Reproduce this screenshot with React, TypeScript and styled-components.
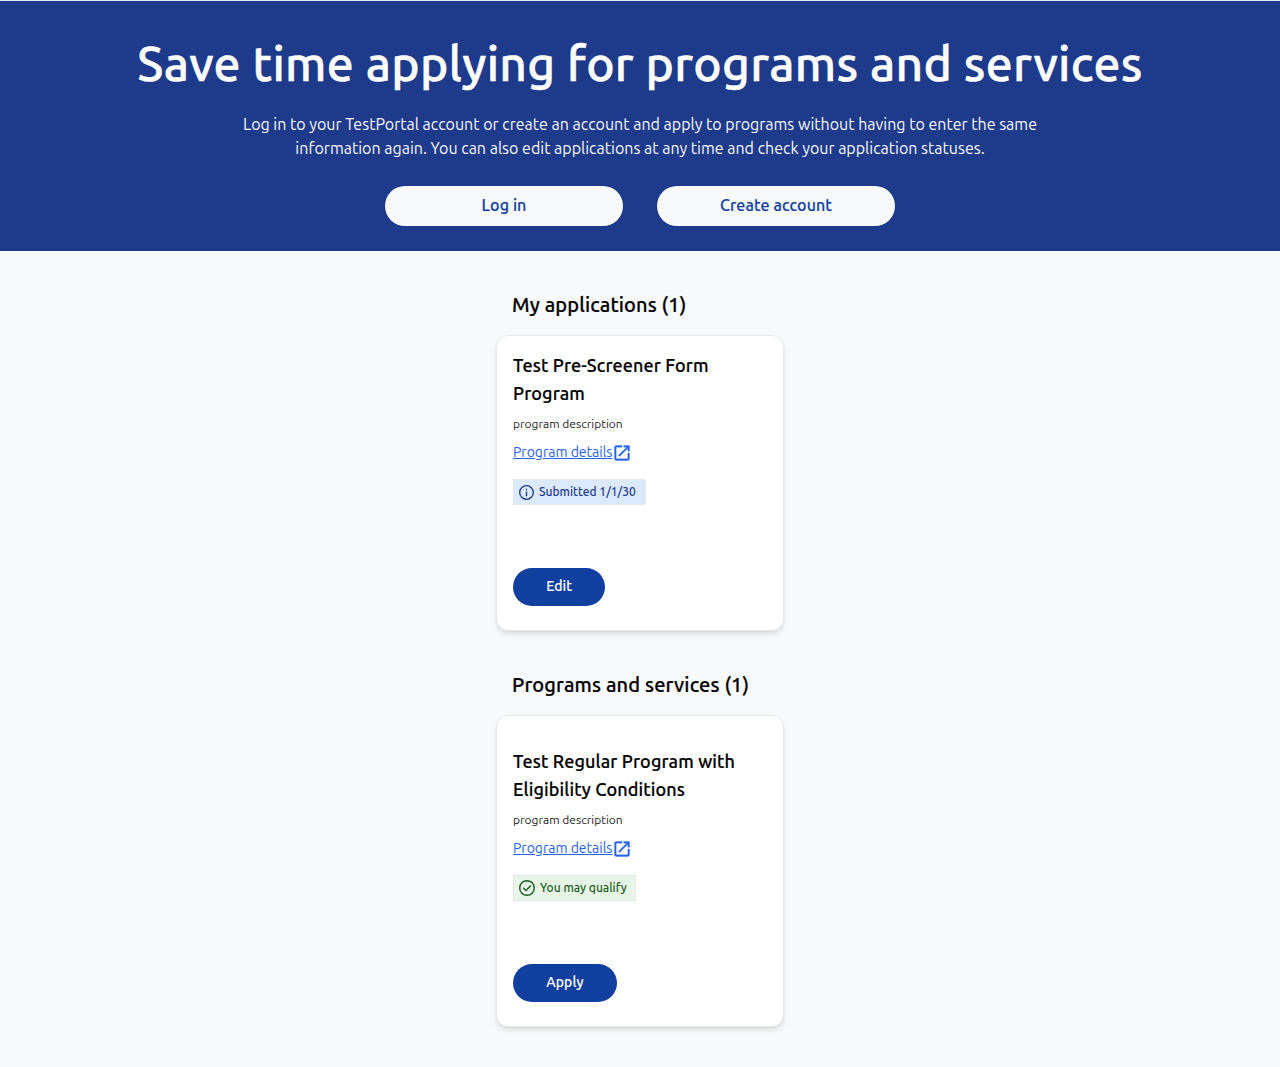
import React from 'react';
import styled, { createGlobalStyle, css } from 'styled-components';

const GlobalStyle = createGlobalStyle`
  *, *::before, *::after { box-sizing: border-box; }
  body {
    margin: 0;
    background: #f8f9fb;
    color: #000;
    font-family: Ubuntu, "Noto Sans", "Open Sans", sans-serif;
    font-size: 16px;
    line-height: 24px;
  }
  h1, h2, h3, p { margin: 0; }
  button { font-family: inherit; cursor: pointer; }
`;

/* Semi-bold: the medium cut, slightly thickened and widened. */
const semiBold = css`
  font-weight: 500;
  letter-spacing: 0.0066em;
  -webkit-text-stroke: 0.01em currentColor;
`;

const Page = styled.div`
  min-height: 1067px;
  border-top: 1px solid #e5e7eb;
`;

const Hero = styled.header`
  display: flex;
  flex-direction: column;
  align-items: center;
  height: 250px;
  padding-top: 38px;
  background: #1e3a8a;
  color: #f8f9fb;
  text-align: center;
`;

const HeroTitle = styled.h1`
  ${semiBold}
  font-size: 48px;
  line-height: 48px;
  color: #fff;
  white-space: nowrap;
`;

const HeroText = styled.p`
  width: 832px;
  margin-top: 25px;
`;

const HeroActions = styled.div`
  display: flex;
  gap: 34px;
  margin-top: 26px;
`;

const HeroButton = styled.button`
  ${semiBold}
  width: 238px;
  height: 40px;
  padding: 0 0 2px;
  border: 0;
  border-radius: 20px;
  background: #f8f9fb;
  color: #113f9f;
  font-size: 16px;
  line-height: 24px;
`;

const Main = styled.main`
  display: flex;
  flex-direction: column;
  gap: 40px;
  width: 288px;
  margin: 0 auto;
  padding-top: 40px;
`;

const SectionTitle = styled.h2`
  ${semiBold}
  margin-bottom: 16px;
  padding-left: 16px;
  font-size: 20px;
  line-height: 28px;
  white-space: nowrap;
`;

const Card = styled.article<{ $height: number }>`
  display: flex;
  flex-direction: column;
  align-items: flex-start;
  justify-content: space-between;
  height: ${({ $height }) => $height}px;
  padding: 15px 16px 24px;
  border: 1px solid #e5e7eb;
  border-radius: 12px;
  background: #fff;
  box-shadow: 0 4px 6px -1px rgba(0, 0, 0, 0.1), 0 2px 4px -2px rgba(0, 0, 0, 0.1);
`;

const CardBody = styled.div<{ $offset: number }>`
  display: flex;
  flex-direction: column;
  align-items: flex-start;
  padding-top: ${({ $offset }) => $offset}px;
`;

const CardTitle = styled.h3`
  ${semiBold}
  font-size: 18px;
  line-height: 28px;
`;

const Description = styled.p`
  margin-top: 9px;
  color: #1b1b1b;
  font-size: 12px;
  line-height: 16px;
`;

const DetailsLink = styled.a`
  display: flex;
  align-items: center;
  margin-top: 9px;
  color: #2563eb;
  font-size: 14px;
  line-height: 20px;
  text-decoration: underline;

  svg { display: block; margin: 2px 0 0 -0.4px; }
`;

const Badge = styled.div<{ $tone: 'info' | 'success' }>`
  display: flex;
  align-items: center;
  gap: 5px;
  width: ${({ $tone }) => ($tone === 'info' ? 133 : 123)}px;
  height: 26px;
  margin-top: 16px;
  padding-left: 5px;
  border: 1px solid #e5e7eb;
  background: ${({ $tone }) => ($tone === 'info' ? '#dbeafe' : '#e8f5e9')};
  color: ${({ $tone }) => ($tone === 'info' ? '#1e3a8a' : '#1b5e20')};
  font-size: 12px;
  font-weight: 500;
  line-height: 16px;
  white-space: nowrap;

  svg { flex: none; }
`;

const CardButton = styled.button`
  ${semiBold}
  height: 38px;
  padding: 0 33.2px 2px;
  border: 0;
  border-radius: 19px;
  background: #113f9f;
  color: #f8f9fb;
  font-size: 14px;
  line-height: 20px;
`;

const OpenIcon = () => (
  <svg width="20" height="20" viewBox="0 0 24 24" fill="currentColor" stroke="currentColor" strokeWidth="0.35" aria-hidden="true">
    <path d="M19 19H5V5h7V3H5a2 2 0 0 0-2 2v14a2 2 0 0 0 2 2h14c1.1 0 2-.9 2-2v-7h-2v7zM14 3v2h3.59l-9.83 9.83 1.41 1.41L19 6.41V10h2V3h-7z" />
  </svg>
);

const InfoIcon = () => (
  <svg width="15" height="15" viewBox="0 0 20 20" fill="currentColor" aria-hidden="true">
    <path d="M9.1 8.8h1.8v6.2H9.1zM9.1 5h1.8v2H9.1z" />
    <path d="M10 0a10 10 0 1 0 0 20 10 10 0 0 0 0-20zm0 18.2a8.2 8.2 0 1 1 0-16.4 8.2 8.2 0 0 1 0 16.4z" />
  </svg>
);

const CheckIcon = () => (
  <svg width="16" height="16" viewBox="0 0 20 20" fill="currentColor" aria-hidden="true">
    <path d="M10 0a10 10 0 1 0 0 20 10 10 0 0 0 0-20zm0 18.2a8.2 8.2 0 1 1 0-16.4 8.2 8.2 0 0 1 0 16.4z" />
    <path d="M14.3 6.1l-5.7 5.7-2.8-2.8-1.3 1.3 4.1 4.1 7-7z" />
  </svg>
);

interface ProgramCardProps {
  title: string;
  badge: string;
  tone: 'info' | 'success';
  action: string;
  height: number;
  offset?: number;
}

const ProgramCard = ({ title, badge, tone, action, height, offset = 0 }: ProgramCardProps) => (
  <Card $height={height}>
    <CardBody $offset={offset}>
      <CardTitle>{title}</CardTitle>
      <Description>program description</Description>
      <DetailsLink href="#">
        Program details
        <OpenIcon />
      </DetailsLink>
      <Badge $tone={tone}>
        {tone === 'info' ? <InfoIcon /> : <CheckIcon />}
        {badge}
      </Badge>
    </CardBody>
    <CardButton>{action}</CardButton>
  </Card>
);

export default function App() {
  return (
    <Page>
      <GlobalStyle />
      <Hero>
        <HeroTitle>Save time applying for programs and services</HeroTitle>
        <HeroText>
          Log in to your TestPortal account or create an account and apply to programs without having to enter the
          same information again. You can also edit applications at any time and check your application statuses.
        </HeroText>
        <HeroActions>
          <HeroButton>Log in</HeroButton>
          <HeroButton>Create account</HeroButton>
        </HeroActions>
      </Hero>
      <Main>
        <section>
          <SectionTitle>My applications (1)</SectionTitle>
          <ProgramCard title="Test Pre-Screener Form Program" badge="Submitted 1/1/30" tone="info" action="Edit" height={296} />
        </section>
        <section>
          <SectionTitle>Programs and services (1)</SectionTitle>
          <ProgramCard
            title="Test Regular Program with Eligibility Conditions"
            badge="You may qualify"
            tone="success"
            action="Apply"
            height={312}
            offset={16}
          />
        </section>
      </Main>
    </Page>
  );
}
